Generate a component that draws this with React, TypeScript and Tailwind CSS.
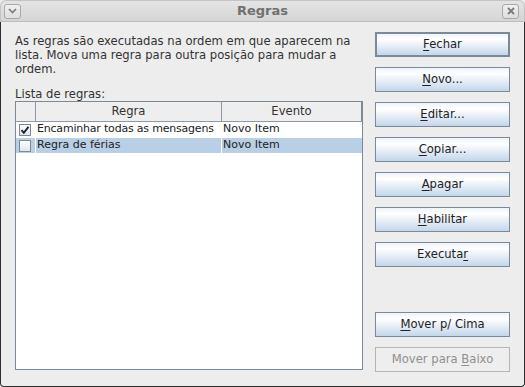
import React from "react";

function Btn({
  pre,
  ul,
  post,
  primary,
  disabled,
  className = "",
}: {
  pre?: string;
  ul: string;
  post?: string;
  primary?: boolean;
  disabled?: boolean;
  className?: string;
}) {
  const base = disabled
    ? "border border-[#b4b4b4] bg-[#eeeeee] text-[#8e8e8e]"
    : primary
    ? "border-2 border-[#7a8a99] bg-linear-to-b from-[#eef3fa] via-[#ffffff] via-25% to-[#c4d6ea] text-[#222]"
    : "border border-[#7a8a99] bg-linear-to-b from-[#eef3fa] via-[#ffffff] via-25% to-[#c4d6ea] text-[#222]";
  return (
    <div className={`h-[25px] w-[135px] flex items-center justify-center leading-none ${base} ${className}`}>
      <span>
        {pre}
        <span className="underline underline-offset-[2px]">{ul}</span>
        {post}
      </span>
    </div>
  );
}

function CheckBox({ checked }: { checked?: boolean }) {
  return (
    <div className="w-[12px] h-[12px] border border-[#7a8a99] bg-linear-to-b from-[#ffffff] to-[#dce6f1] flex items-center justify-center">
      {checked && (
        <svg width="10" height="10" viewBox="0 0 10 10">
          <path d="M1.5 5.2 L3.8 7.8 L8.5 1.8" stroke="#222" strokeWidth="1.9" fill="none" />
        </svg>
      )}
    </div>
  );
}

export default function App() {
  return (
    <div className="w-[525px] h-[387px] flex flex-col font-['DejaVu_Sans',sans-serif] text-[11.6px] text-[#222] bg-[#ededed]">
      {/* Title bar */}
      <div className="h-[22px] flex items-center justify-between px-[3px] border border-b-[#bdbdbd] border-[#c4c4c4] rounded-t-[6px] bg-linear-to-b from-[#e4e4e4] to-[#d5d5d5] relative">
        <div className="w-[17px] h-[15px] rounded-[3px] border border-[#a9a9a9] bg-linear-to-b from-[#f0f0f0] to-[#dedede] flex items-center justify-center">
          <svg width="9" height="6" viewBox="0 0 9 6">
            <path d="M1 1 L4.5 4.5 L8 1" stroke="#7a7a7a" strokeWidth="1.6" fill="none" />
          </svg>
        </div>
        <div className="absolute left-0 right-0 text-center font-bold text-[13px] text-[#707070] pointer-events-none">Regras</div>
        <div className="w-[17px] h-[15px] mr-[2px] rounded-[3px] border border-[#a9a9a9] bg-linear-to-b from-[#f0f0f0] to-[#dedede] flex items-center justify-center">
          <svg width="8" height="8" viewBox="0 0 8 8">
            <path d="M1 1 L7 7 M7 1 L1 7" stroke="#7a7a7a" strokeWidth="1.8" fill="none" />
          </svg>
        </div>
      </div>

      {/* Body */}
      <div className="flex-1 flex border-x border-b border-[#2e2e2e] rounded-b-[4px] pl-[14px]">
        {/* Left column */}
        <div className="w-[348px] flex flex-col pt-[12px]">
          <p className="leading-[14px] text-[#333]">
            As regras são executadas na ordem em que aparecem na lista. Mova uma regra para outra posição para mudar a ordem.
          </p>
          <div className="mt-[11px] leading-[14px] text-[#333]">Lista de regras:</div>
          <div className="h-[269px] border border-[#7a8a99] bg-white flex flex-col">
            <div className="h-[20px] flex bg-[#eeeeee] border-b border-[#8d9aa6] text-[#333]">
              <div className="w-[20px] border-r border-[#8d9aa6]"></div>
              <div className="w-[186px] border-r border-[#8d9aa6] flex items-center justify-center">Regra</div>
              <div className="flex-1 border-r border-[#7a8a99] flex items-center justify-center">Evento</div>
            </div>
            <div className="h-[16px] flex border-b border-white text-[11px]">
              <div className="w-[20px] border-r border-white flex items-center pl-[3px]">
                <CheckBox checked />
              </div>
              <div className="w-[186px] border-r border-white flex items-center pl-[1px] whitespace-nowrap overflow-hidden tracking-[-0.2px]">
                Encaminhar todas as mensagens
              </div>
              <div className="flex-1 flex items-center pl-[1px]">Novo Item</div>
            </div>
            <div className="h-[16px] flex border-b border-white text-[11px]">
              <div className="w-[20px] border-r border-white bg-[#b8cfe5] flex items-center pl-[3px]">
                <CheckBox />
              </div>
              <div className="w-[186px] border-r border-white bg-[#b8cfe5] flex items-center pl-[1px]">Regra de férias</div>
              <div className="flex-1 bg-[#b8cfe5] flex items-center pl-[1px]">Novo Item</div>
            </div>
          </div>
        </div>

        {/* Right column */}
        <div className="ml-[12px] flex flex-col pt-[10px]">
          <Btn ul="F" post="echar" primary />
          <Btn ul="N" post="ovo..." className="mt-[10px]" />
          <Btn ul="E" post="ditar..." className="mt-[10px]" />
          <Btn ul="C" post="opiar..." className="mt-[10px]" />
          <Btn ul="A" post="pagar" className="mt-[10px]" />
          <Btn ul="H" post="abilitar" className="mt-[10px]" />
          <Btn pre="Executa" ul="r" className="mt-[10px]" />
          <Btn ul="M" post="over p/ Cima" className="mt-[45px]" />
          <Btn pre="Mover para " ul="B" post="aixo" disabled className="mt-[10px]" />
        </div>
      </div>
    </div>
  );
}
